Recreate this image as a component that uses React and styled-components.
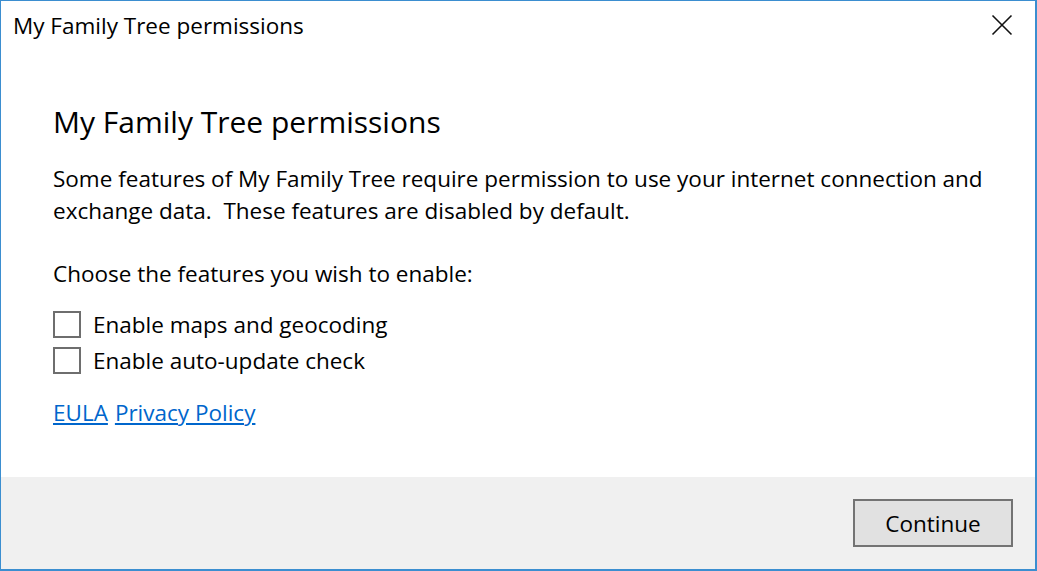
import React from "react";
import styled, { createGlobalStyle } from "styled-components";

const GlobalStyle = createGlobalStyle`
  html, body {
    margin: 0;
    padding: 0;
    background: #fff;
  }
  * {
    box-sizing: border-box;
  }
`;

const Window = styled.div`
  width: 1037px;
  height: 571px;
  display: flex;
  flex-direction: column;
  border: 1px solid #3b8ed0;
  border-right-width: 2px;
  border-bottom-width: 2px;
  font-family: "Open Sans", "Noto Sans", sans-serif;
  color: #000;
  background: #fff;
`;

const TitleBar = styled.div`
  height: 50px;
  flex-shrink: 0;
  display: flex;
  align-items: center;
  justify-content: space-between;
  padding-left: 12px;

  span {
    font-size: 22.5px;
    line-height: 30px;
  }
`;

const CloseButton = styled.button`
  width: 68px;
  height: 48px;
  border: none;
  background: transparent;
  display: flex;
  align-items: center;
  justify-content: center;
  padding: 0 0 3px 2px;
`;

const Content = styled.div`
  flex: 1;
  padding: 51px 40px 0 52px;
`;

const Heading = styled.h1`
  margin: 0 0 21px;
  font-size: 30px;
  font-weight: 400;
  line-height: 40px;
`;

const Text = styled.p`
  margin: 0 0 ${(p) => p.$gap || 0}px;
  font-size: 22.5px;
  line-height: 32px;
`;

const Options = styled.div`
  display: flex;
  flex-direction: column;
  gap: 9px;
  margin-top: 21px;
`;

const Option = styled.label`
  display: flex;
  align-items: center;
  gap: 12px;
  font-size: 22.5px;
  line-height: 27px;
`;

const Box = styled.span`
  width: 28px;
  height: 27px;
  border: 2px solid #6e6e6e;
  background: #fff;
  flex-shrink: 0;
`;

const Links = styled.div`
  margin-top: 25px;
  display: flex;
  gap: 7px;
  font-size: 22.5px;
  line-height: 27.5px;

  a {
    color: #0066cc;
    text-decoration: underline;
  }
`;

const Footer = styled.div`
  height: 92px;
  flex-shrink: 0;
  background: #f0f0f0;
  display: flex;
  justify-content: flex-end;
  align-items: flex-start;
  padding: 22px 22px 0 0;
`;

const Button = styled.button`
  width: 160px;
  height: 48px;
  border: 2px solid #737373;
  background: #e1e1e1;
  font-family: inherit;
  font-size: 22.5px;
  color: #000;
  padding: 0;
`;

function CloseIcon() {
  return (
    <svg width="22" height="22" viewBox="0 0 22 22">
      <path d="M1.5 1.5 L20.5 20.5 M20.5 1.5 L1.5 20.5" stroke="#111" strokeWidth="1.6" fill="none" />
    </svg>
  );
}

export default function App() {
  return (
    <>
      <GlobalStyle />
      <Window>
        <TitleBar>
          <span>My Family Tree permissions</span>
          <CloseButton aria-label="Close">
            <CloseIcon />
          </CloseButton>
        </TitleBar>
        <Content>
          <Heading>My Family Tree permissions</Heading>
          <Text $gap={31}>
            Some features of My Family Tree require permission to use your internet connection and
            <br />
            exchange data.&nbsp; These features are disabled by default.
          </Text>
          <Text>Choose the features you wish to enable:</Text>
          <Options>
            <Option>
              <Box />
              Enable maps and geocoding
            </Option>
            <Option>
              <Box />
              Enable auto-update check
            </Option>
          </Options>
          <Links>
            <a href="#eula">EULA</a>
            <a href="#privacy">Privacy Policy</a>
          </Links>
        </Content>
        <Footer>
          <Button>Continue</Button>
        </Footer>
      </Window>
    </>
  );
}
